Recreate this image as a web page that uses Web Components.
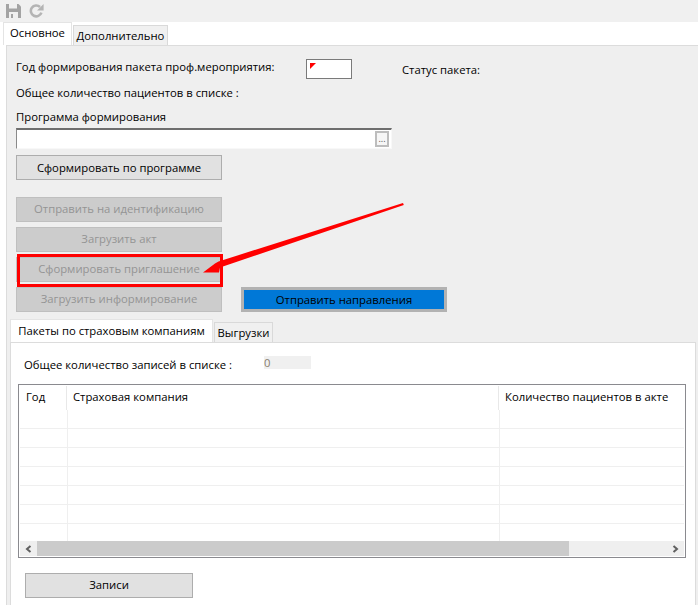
<!DOCTYPE html>
<html>
<head>
<meta charset="utf-8">
<style>
  html, body { margin: 0; padding: 0; background: #fff; }
  body { width: 698px; height: 605px; overflow: hidden; font: 11.3px "Open Sans", "Noto Sans", sans-serif; color: #000; position: relative; }
</style>
</head>
<body>
<app-toolbar></app-toolbar>

<tab-strip style="margin-left:3px" first="Основное" second="Дополнительно" w1="69" w2="95"></tab-strip>
<main-pane>
  <form-row slot="year"></form-row>
  <app-button slot="actions" tone="normal">Сформировать по программе</app-button>
  <app-button slot="disabled" tone="off">Отправить на идентификацию</app-button>
  <app-button slot="disabled" tone="off">Загрузить акт</app-button>
  <app-button slot="disabled" tone="off">Сформировать приглашение</app-button>
  <app-button slot="last" tone="off">Загрузить информирование</app-button>
  <app-button slot="last" tone="blue">Отправить направления</app-button>
  <tab-strip slot="lower" first="Пакеты по страховым компаниям" second="Выгрузки" w1="203" w2="59" low></tab-strip>
  <packet-panel slot="lower"></packet-panel>
</main-pane>
<red-arrow></red-arrow>

<script>
function define( name, css, html ) {
  customElements.define( name, class extends HTMLElement {
    constructor() {
      super();
      this.attachShadow( {mode: 'open'} );
      this.shadowRoot.innerHTML = `<style>${css}</style>${typeof html === 'function' ? html( this ) : html}`;
    }
  } );
}

define( 'app-toolbar', `
  :host { display: flex; align-items: center; gap: 8px; height: 22px; padding: 0 0 1px 6px; box-sizing: border-box; background: #f0f0f0; }
  svg { display: block; }
`, `
  <svg width="15" height="14" viewBox="0 0 15 14"><path fill="#a3a3a3" d="M0 0h12.5L15 2.5V14H0z"/><path fill="#f0f0f0" d="M3 0h8v4.5H3zM3 8h9v6H3z"/><path fill="#a3a3a3" d="M5 10h2v4H5z"/></svg>
  <svg width="15" height="14" viewBox="0 0 15 14" fill="none"><path stroke="#b4b4b4" stroke-width="2.6" d="M12.4 8.6A5.4 5.4 0 1 1 11 3"/><path fill="#b4b4b4" d="M14.6 0v6.4H8z"/></svg>
` );

define( 'tab-strip', `
  :host { display: flex; align-items: flex-end; height: 23px; box-sizing: border-box; position: relative; z-index: 1; }
  div { box-sizing: border-box; white-space: nowrap; text-align: center; background: #f0f0f0; border: 1px solid #d9d9d9; border-bottom: 0; height: 20px; line-height: 19px; }
  div.on { background: #fff; height: 23px; line-height: 20px; border-color: #e4e4e4; }
  :host([low]) div { line-height: 20px; }
  :host([low]) div.on { line-height: 22px; }
`, el => `
  <div class="on" style="width:${el.getAttribute( 'w1' )}px">${el.getAttribute( 'first' )}</div>
  <div style="width:${el.getAttribute( 'w2' )}px;margin-left:1px">${el.getAttribute( 'second' )}</div>
` );

define( 'app-button', `
  :host { display: flex; box-sizing: border-box; width: 206px; height: 25px; align-items: center; justify-content: center; white-space: nowrap; border: 1px solid #adadad; background: #e1e1e1; }
  :host([tone=off]) { background: #cccccc; border-color: #bfbfbf; color: #949494; padding-bottom: 2px; }
  :host([tone=blue]) { background: #0078d7; border: 3px solid #b2b2b2; color: #000; }
`, `<slot></slot>` );

define( 'form-row', `
  :host { display: block; position: relative; }
  .year { display: flex; align-items: center; height: 19px; }
  .label { width: 290px; margin-top: -4px; white-space: nowrap; }
  .box { box-sizing: border-box; flex: none; width: 46px; height: 20px; background: #fff; border: 1px solid #7a7a7a; position: relative; }
  .box::before { content: ""; position: absolute; left: 3px; top: 3px; border-style: solid; border-width: 6px 6px 0 0; border-color: #f00 transparent transparent transparent; }
  .status { margin-left: 50px; margin-top: 1px; }
  .count { margin-top: 6px; height: 17px; line-height: 17px; }
  .prog { margin-top: 7px; height: 17px; line-height: 17px; }
  .input { box-sizing: border-box; width: 376px; height: 21px; margin-top: 3px; background: #fff; border: 1px solid #f8f8f8; border-top: 2px solid #6e6e6e; border-left: 1px solid #8a8a8a; display: flex; justify-content: flex-end; align-items: center; padding-right: 2px; }
  .dots { box-sizing: border-box; width: 14px; height: 16px; border: 2px solid #bdbdbd; background: #f6f6f6; font-size: 9px; line-height: 12px; text-align: center; color: #555; }
`, `
  <div class="year"><span class="label">Год формирования пакета проф.мероприятия:</span><span class="box"></span><span class="status">Статус пакета:</span></div>
  <div class="count">Общее количество пациентов в списке :</div>
  <div class="prog">Программа формирования</div>
  <div class="input"><span class="dots">...</span></div>
` );

define( 'main-pane', `
  :host { display: block; box-sizing: border-box; margin-left: 6px; height: 560px; background: #efefef; border-left: 1px solid #dcdcdc; border-top: 1px solid #dcdcdc; padding: 13px 0 0 9px; }
  .actions { margin-top: 6px; display: flex; }
  .disabled { margin-top: 17px; display: grid; gap: 5px; grid-template-columns: 206px; }
  .last { margin-top: 5px; display: flex; gap: 19px; }
  .lower { margin: 7px 0 0 -6px; }
`, `
  <slot name="year"></slot>
  <div class="actions"><slot name="actions"></slot></div>
  <div class="disabled"><slot name="disabled"></slot></div>
  <div class="last"><slot name="last"></slot></div>
  <div class="lower"><slot name="lower"></slot></div>
` );

define( 'packet-panel', `
  :host { display: block; box-sizing: border-box; width: 686px; height: 270px; background: #fff; border: 1px solid #dcdcdc; padding: 13px 0 0 7px; }
  .sum { display: flex; align-items: center; height: 17px; padding-left: 6px; }
  .sum span:first-child { width: 240px; white-space: nowrap; }
  .val { width: 47px; height: 13px; margin-top: -5px; background: #f0f0f0; color: #8a8070; line-height: 13px; }
  .table { box-sizing: border-box; width: 668px; height: 174px; margin-top: 11px; border: 1px solid #8a8a8f; padding: 1px; display: flex; flex-direction: column; }
  .head, .row { display: grid; grid-template-columns: 47px 432px 1fr; }
  .head { height: 24px; line-height: 22px; }
  .head span { padding-left: 6px; border-right: 1px solid #e8e8e8; white-space: nowrap; }
  .head span:last-child { border: 0; }
  .row { height: 19px; box-sizing: border-box; border-bottom: 1px solid #efefef; }
  .row i { border-right: 1px solid #efefef; margin-left: 1px; margin-right: -1px; }
  .row i:last-child { border: 0; }
  .rows { flex: 1; }
  .bar { height: 15px; display: flex; background: #efefef; }
  .btn { width: 17px; display: flex; align-items: center; justify-content: center; }
  .thumb { width: 532px; background: #cbcbcb; }
  .track { flex: 1; }
  .records { box-sizing: border-box; width: 168px; height: 25px; margin: 15px 0 0 7px; padding-bottom: 2px; border: 1px solid #adadad; background: #e1e1e1; display: flex; align-items: center; justify-content: center; }
`, `
  <div class="sum"><span>Общее количество записей в списке :</span><span class="val">0</span></div>
  <div class="table">
    <div class="head"><span>Год</span><span>Страховая компания</span><span>Количество пациентов в акте</span></div>
    <div class="rows">
      ${'<div class="row"><i></i><i></i><i></i></div>'.repeat( 6 )}
      <div class="row" style="border:0;height:17px"><i></i><i></i><i></i></div>
    </div>
    <div class="bar">
      <div class="btn"><svg width="7" height="8" viewBox="0 0 7 8"><path fill="none" stroke="#606060" stroke-width="2" d="M5.5 1 2 4l3.5 3"/></svg></div>
      <div class="thumb"></div><div class="track"></div>
      <div class="btn"><svg width="7" height="8" viewBox="0 0 7 8"><path fill="none" stroke="#606060" stroke-width="2" d="M1.5 1 5 4 1.5 7"/></svg></div>
    </div>
  </div>
  <div class="records">Записи</div>
` );

// annotation drawn over the form
define( 'red-arrow', `
  :host { position: absolute; left: 0; top: 0; width: 698px; height: 605px; pointer-events: none; z-index: 5; }
  svg { display: block; }
`, `
  <svg width="698" height="605" viewBox="0 0 698 605">
    <rect x="18.5" y="255.5" width="203" height="30" fill="none" stroke="#f00" stroke-width="3"/>
    <path fill="#f00" d="M403 203 L403.8 205 L220 267.5 L219 272.5 L203 272.5 L215 263.5 L218.5 261.5 Z"/>
  </svg>
` );
</script>
</body>
</html>
